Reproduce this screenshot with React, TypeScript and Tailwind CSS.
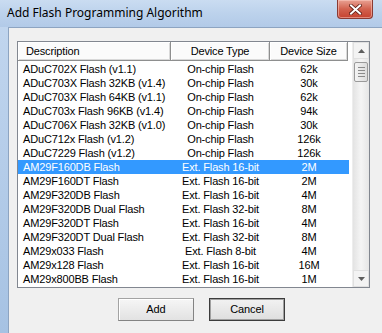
import React from "react";

const rows: [string, string, string][] = [
  ["ADuC702X Flash (v1.1)", "On-chip Flash", "62k"],
  ["ADuC703X Flash 32KB (v1.4)", "On-chip Flash", "30k"],
  ["ADuC703X Flash 64KB (v1.1)", "On-chip Flash", "62k"],
  ["ADuC703x Flash 96KB (v1.4)", "On-chip Flash", "94k"],
  ["ADuC706X Flash 32KB (v1.0)", "On-chip Flash", "30k"],
  ["ADuC712x Flash (v1.2)", "On-chip Flash", "126k"],
  ["ADuC7229 Flash (v1.2)", "On-chip Flash", "126k"],
  ["AM29F160DB Flash", "Ext. Flash 16-bit", "2M"],
  ["AM29F160DT Flash", "Ext. Flash 16-bit", "2M"],
  ["AM29F320DB Flash", "Ext. Flash 16-bit", "4M"],
  ["AM29F320DB Dual Flash", "Ext. Flash 32-bit", "8M"],
  ["AM29F320DT Flash", "Ext. Flash 16-bit", "4M"],
  ["AM29F320DT Dual Flash", "Ext. Flash 32-bit", "8M"],
  ["AM29x033 Flash", "Ext. Flash 8-bit", "4M"],
  ["AM29x128 Flash", "Ext. Flash 16-bit", "16M"],
  ["AM29x800BB Flash", "Ext. Flash 16-bit", "1M"],
];

const font = { fontFamily: '"Liberation Sans", Arial, sans-serif' };

export default function App() {
  return (
    <div
      className="w-[382px] h-[333px] overflow-hidden flex flex-col bg-gradient-to-b from-[#c3d7ef] to-[#a6c2e3]"
      style={font}
    >
      {/* Title bar */}
      <div className="h-[27px] flex items-start shrink-0 bg-gradient-to-b from-[#cadcf1] via-[#bcd2ec] to-[#b2cae8]">
        <div
          className="pl-[7px] pt-[5px] text-[12px] text-black leading-[16px]"
          style={{ fontFamily: '"Noto Sans", "Open Sans", sans-serif' }}
        >
          Add Flash Programming Algorithm
        </div>
        <div className="flex-1" />
        <div className="mr-[9px] w-[36px] h-[19px] rounded-b-[4px] border border-t-0 border-[#8a3a33] bg-gradient-to-b from-[#e8a193] via-[#d2624f] to-[#c5412f] flex items-center justify-center shadow-[inset_0_0_0_1px_rgba(255,210,200,0.5)]">
          <svg width="13" height="11" viewBox="0 0 13 11">
            <path d="M2 1.5 L11 9.5 M11 1.5 L2 9.5" stroke="#5a1a12" strokeWidth="3.6" strokeLinecap="square" />
            <path d="M2 1.5 L11 9.5 M11 1.5 L2 9.5" stroke="#ffffff" strokeWidth="2" strokeLinecap="square" />
          </svg>
        </div>
      </div>

      {/* Body */}
      <div className="flex flex-1">
        <div className="w-[8px] shrink-0" />
        <div className="flex-1 bg-[#f0f0f0] border-l border-t border-[#8da4c1] pl-[8px] pt-[13px]">
          {/* List box */}
          <div className="w-[353px] h-[247px] border border-[#828790] bg-white flex text-[11px] tracking-[-0.15px] text-black">
            <div className="flex-1 flex flex-col">
              {/* Header */}
              <div className="flex h-[20px] leading-[18px]">
                <div className="w-[153px] h-[19px] pl-[8px] border-r border-b border-[#8e8f8f] shadow-[inset_1px_1px_0_#ffffff,inset_-1px_-1px_0_#d9d9d9] bg-[#fbfbfb]">
                  Description
                </div>
                <div className="w-[99px] h-[19px] text-center border-r border-b border-[#8e8f8f] shadow-[inset_1px_1px_0_#ffffff,inset_-1px_-1px_0_#d9d9d9] bg-[#fbfbfb]">
                  Device Type
                </div>
                <div className="w-[78px] h-[19px] text-center border-r border-b border-[#8e8f8f] shadow-[inset_1px_1px_0_#ffffff,inset_-1px_-1px_0_#d9d9d9] bg-[#fbfbfb]">
                  Device Size
                </div>
              </div>
              {rows.map((r, i) => {
                const sel = i === 7;
                return (
                  <div
                    key={i}
                    className={
                      "flex h-[14px] leading-[14px] w-[331px] " +
                      (sel ? "bg-[#3399ff] text-white" : "")
                    }
                  >
                    <div className="w-[153px] pl-[5px] whitespace-nowrap">{r[0]}</div>
                    <div className="w-[99px] text-center whitespace-nowrap">{r[1]}</div>
                    <div className="w-[78px] text-center whitespace-nowrap">{r[2]}</div>
                  </div>
                );
              })}
            </div>
            {/* Scrollbar */}
            <div className="w-[17px] flex flex-col bg-gradient-to-r from-[#e3e3e3] via-[#f5f5f5] to-[#e6e6e6] border-l border-[#ededed]">
              <div className="h-[17px] flex items-center justify-center border border-[#e0e0e0] bg-[#f3f3f3]">
                <svg width="7" height="4" viewBox="0 0 7 4">
                  <path d="M0 4 L3.5 0 L7 4 Z" fill="#5e5e5e" />
                </svg>
              </div>
              <div className="mt-[3px] mx-[1px] h-[20px] rounded-[2px] border border-[#9a9a9a] bg-gradient-to-r from-[#f4f4f4] to-[#dcdcdc] flex flex-col items-center justify-center gap-[2px]">
                <div className="w-[7px] h-[1px] bg-[#8a8a8a]" />
                <div className="w-[7px] h-[1px] bg-[#8a8a8a]" />
                <div className="w-[7px] h-[1px] bg-[#8a8a8a]" />
                <div className="w-[7px] h-[1px] bg-[#8a8a8a]" />
              </div>
              <div className="flex-1" />
              <div className="h-[17px] flex items-center justify-center border border-[#e0e0e0] bg-[#f3f3f3]">
                <svg width="7" height="4" viewBox="0 0 7 4">
                  <path d="M0 0 L7 0 L3.5 4 Z" fill="#5e5e5e" />
                </svg>
              </div>
            </div>
          </div>

          {/* Buttons */}
          <div className="flex pl-[101px] pt-[10px] gap-[15px] text-[11px] tracking-[-0.1px] text-black">
            <div className="w-[76px] h-[23px] flex items-center justify-center border border-[#a3a3a3] border-b-[#838383] border-r-[#838383] bg-gradient-to-b from-[#f6f6f6] to-[#e2e2e2] shadow-[inset_1px_1px_0_#ffffff]">
              Add
            </div>
            <div className="w-[76px] h-[23px] flex items-center justify-center border border-[#3c3c3c] bg-gradient-to-b from-[#f2f2f2] to-[#dedede] shadow-[inset_0_0_0_1px_#a0a0a0]">
              Cancel
            </div>
          </div>
        </div>
      </div>
    </div>
  );
}
